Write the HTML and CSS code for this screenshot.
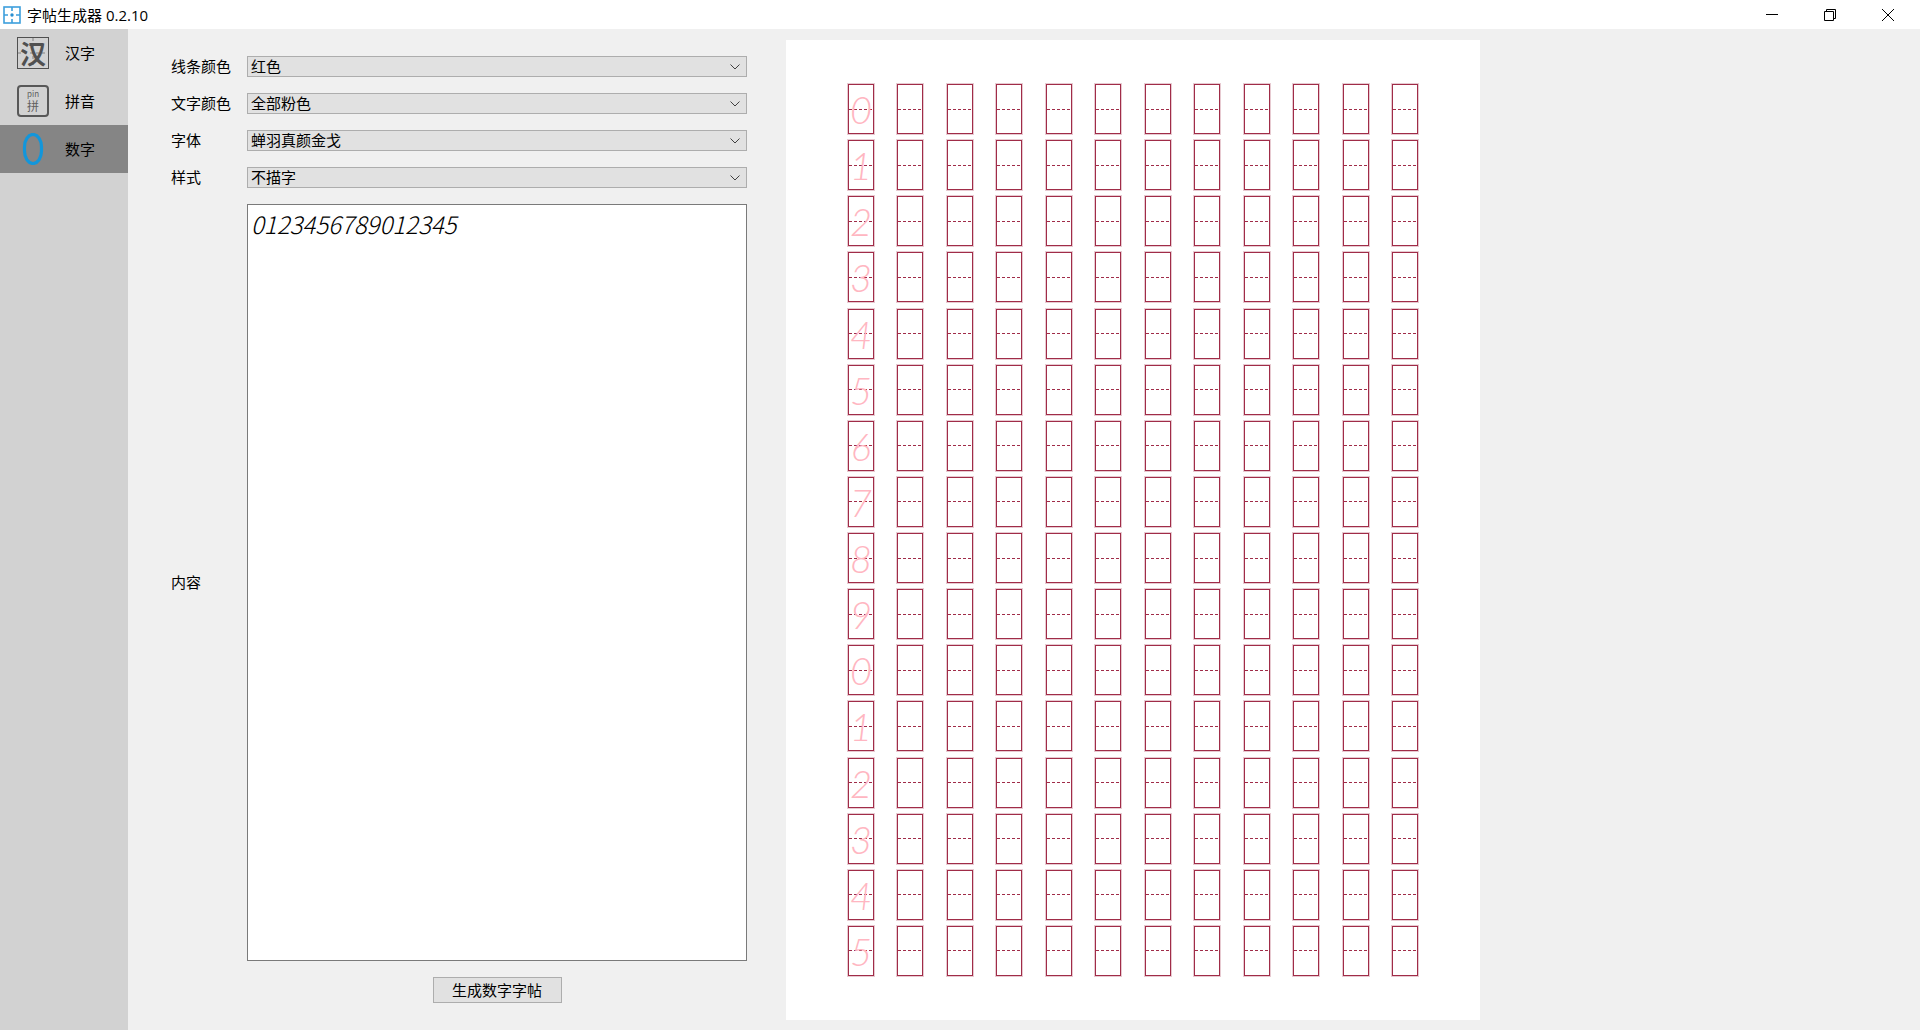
FILE: index.html
```html
<!DOCTYPE html>
<html lang="zh-CN">
<head>
<meta charset="utf-8">
<meta name="viewport" content="width=device-width, initial-scale=1">
<title>字帖生成器 0.2.10</title>
<link rel="stylesheet" href="styles.css">
</head>
<body>
<header class="titlebar">
  <svg class="app-icon" viewBox="0 0 18 18" aria-hidden="true">
    <rect x="1" y="1" width="16" height="16" fill="none" stroke="#3d9fdc" stroke-width="1.6"/>
    <path d="M9 1v4M9 13v4M1 9h4M13 9h4" stroke="#3d9fdc" stroke-width="1.6"/>
    <circle cx="9" cy="9" r="1.7" fill="#2a8fd0"/>
  </svg>
  <h1 class="title">字帖生成器 0.2.10</h1>
  <div class="window-controls">
    <button type="button" class="window-button" aria-label="最小化"><svg viewBox="0 0 12 12"><path d="M0 5.500h12"/></svg></button>
    <button type="button" class="window-button" aria-label="还原"><svg viewBox="0 0 12 12"><path d="M.5 2.500h9v9h-9zM2.500 2.500v-2h9v9h-2"/></svg></button>
    <button type="button" class="window-button" aria-label="关闭"><svg viewBox="0 0 12 12"><path d="M0 0l12 12M12 0L0 12"/></svg></button>
  </div>
</header>
<main class="workspace">
  <nav class="sidebar">
    <a class="tab" href="#hanzi"><span class="tab-icon icon-hanzi" aria-hidden="true">汉</span>汉字</a>
    <a class="tab" href="#pinyin"><span class="tab-icon icon-pinyin" aria-hidden="true"><span class="pinyin-top">pin</span><span class="pinyin-char">拼</span></span>拼音</a>
    <a class="tab tab-active" href="#digits" aria-current="page"><svg class="tab-icon" viewBox="0 0 32 32" aria-hidden="true"><rect x="7.500" y="1.500" width="17" height="29" rx="8.500" ry="12.500" fill="none" stroke="#1296db" stroke-width="3.200"/></svg>数字</a>
  </nav>
  <form class="settings">
    <label for="line-color">线条颜色</label>
    <select id="line-color"><option>红色</option></select>
    <label for="text-color">文字颜色</label>
    <select id="text-color"><option>全部粉色</option></select>
    <label for="font">字体</label>
    <select id="font"><option>蝉羽真颜金戈</option></select>
    <label for="mode">样式</label>
    <select id="mode"><option>不描字</option></select>
    <label for="content">内容</label>
    <textarea id="content" spellcheck="false">0123456789012345</textarea>
    <button type="button" class="generate">生成数字字帖</button>
  </form>
  <section class="preview">
    <div class="paper" id="paper"></div>
  </section>
</main>
<script src="sheet.js"></script>
</body>
</html>
```
FILE: styles.css
```css
* { box-sizing: border-box; }

body {
  margin: 0;
  min-height: 100vh;
  display: flex;
  flex-direction: column;
  background: #f0f0f0;
  color: #000;
  font: 15px/20px "Noto Sans CJK SC", sans-serif;
}

button, select { font: inherit; color: inherit; }

.titlebar {
  display: flex;
  align-items: center;
  height: 29px;
  padding: 0 3px;
  background: #fff;
}
.app-icon { width: 18px; height: 18px; }
.title {
  margin: 0 auto 0 6px;
  font: 400 15px/20px "Open Sans", "Noto Sans CJK SC", sans-serif;
}
.window-controls { display: flex; }
.window-button {
  width: 58px;
  height: 28px;
  padding: 0;
  border: 0;
  background: none;
  display: grid;
  place-items: center;
}
.window-button svg { width: 12px; height: 12px; fill: none; stroke: #000; }

.workspace { flex: 1; display: flex; }

.sidebar { width: 128px; background: #d2d2d2; }
.tab {
  display: flex;
  align-items: center;
  gap: 16px;
  height: 48px;
  padding-left: 17px;
  color: inherit;
  text-decoration: none;
}
.tab-active { background: #858585; }
.tab-icon { width: 32px; height: 32px; flex: none; }
.icon-hanzi {
  display: grid;
  place-items: center;
  border: 1px solid #505050;
  color: #505050;
  font: 700 26px/28px "Noto Sans CJK SC", sans-serif;
  background:
    repeating-linear-gradient(90deg, #aaa 0 3px, transparent 3px 6px) center / 100% 2px no-repeat,
    repeating-linear-gradient(#aaa 0 3px, transparent 3px 6px) center / 2px 100% no-repeat;
}
.icon-pinyin {
  display: flex;
  flex-direction: column;
  align-items: center;
  padding-top: 2px;
  border: 2px solid #585858;
  border-radius: 4px;
  color: #606060;
}
.pinyin-top { font-size: 8px; line-height: 10px; }
.pinyin-char { font-size: 12px; line-height: 14px; }

.settings {
  width: 619px;
  padding: 27px 0 27px 43px;
  display: grid;
  grid-template-columns: 60px 1fr;
  grid-template-rows: repeat(4, 21px) 1fr 26px;
  column-gap: 16px;
  row-gap: 16px;
  align-items: center;
}
label { padding-bottom: 2px; }
select {
  appearance: none;
  width: 100%;
  height: 21px;
  margin: 0;
  padding: 0 24px 2px 3px;
  border: 1px solid #adadad;
  border-radius: 0;
  line-height: 17px;
  background: #e1e1e1 url("data:image/svg+xml,%3Csvg xmlns='http://www.w3.org/2000/svg' width='10' height='6'%3E%3Cpath d='M.5.5L5 5 9.500.5' fill='none' stroke='%23404040'/%3E%3C/svg%3E") no-repeat right 6px center;
}
textarea {
  align-self: stretch;
  width: 100%;
  margin: 0;
  padding: 3px;
  border: 1px solid #7a7a7a;
  resize: none;
  background: #fff;
  color: #000;
  font: italic 300 24px/32px "Noto Sans CJK SC", sans-serif;
}
.generate {
  grid-column: 2;
  justify-self: center;
  width: 129px;
  height: 26px;
  padding: 0;
  border: 1px solid #adadad;
  background: #e1e1e1;
}

.preview { flex: 1; display: flex; padding: 11px 0 10px 39px; }
.paper {
  aspect-ratio: 694 / 980;
  padding: 44px 62px;
  background: #fff;
  display: grid;
  grid-template-columns: repeat(12, 26px);
  grid-auto-rows: 50px;
  justify-content: space-between;
  align-content: space-between;
}
.cell {
  display: grid;
  place-items: center;
  border: 1px solid #a02c48;
  box-shadow: 0 0 0 1px #a02c4840;
  background: repeating-linear-gradient(90deg, #a02c48 0 3px, transparent 3px 5px) center / 100% 1px no-repeat;
  color: #ffb6c1;
  font: italic 300 38px/44px "Lato", sans-serif;
}
```
FILE: sheet.js
```javascript
const COLUMNS = 12;
const paper = document.getElementById("paper");

for (const digit of document.getElementById("content").value.trim()) {
  for (let column = 0; column < COLUMNS; column++) {
    const cell = document.createElement("div");
    cell.className = "cell";
    if (column === 0) cell.textContent = digit;
    paper.append(cell);
  }
}
```
